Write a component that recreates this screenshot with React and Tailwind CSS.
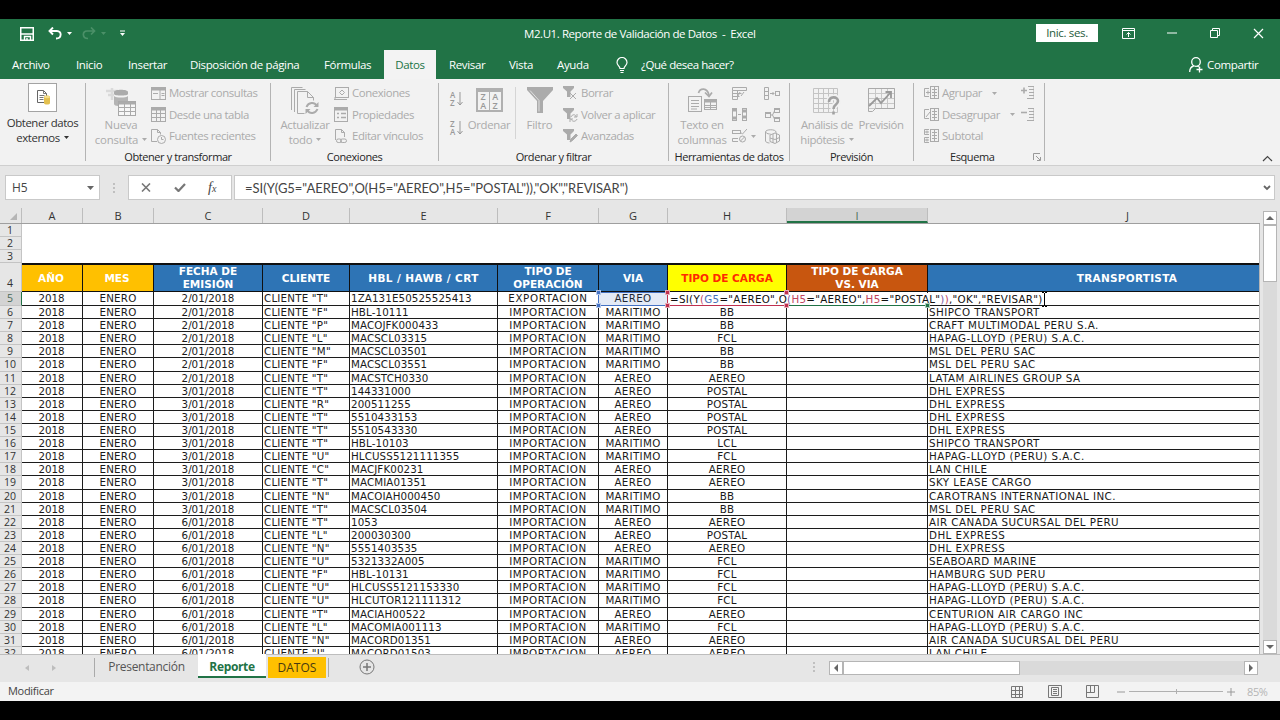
import React from "react";

const COLS = ["A", "B", "C", "D", "E", "F", "G", "H", "I", "J"];
const COL_W = [
  "w-[61px]", "w-[71px]", "w-[109px]", "w-[87px]", "w-[148px]",
  "w-[101px]", "w-[69px]", "w-[119px]", "w-[141px]", "w-[334px]",
];
const COL_TRACK = [
  "pr-[1px]", "tracking-[0.2px]", "", "tracking-[0.2px]", "tracking-[0.1px]",
  "tracking-[0.6px]", "tracking-[0.35px]", "tracking-[0.25px]", "", "tracking-[0.46px]",
];

const HEADERS = [
  ["AÑO"], ["MES"], ["FECHA DE", "EMISIÓN"], ["CLIENTE"], ["HBL / HAWB / CRT"],
  ["TIPO DE", "OPERACIÓN"], ["VIA"], ["TIPO DE CARGA"], ["TIPO DE CARGA", "VS. VIA"], ["TRANSPORTISTA"],
];
const HEADER_BG = [
  "bg-[#ffc000] text-white pr-[2px]", "bg-[#ffc000] text-white pr-[2px]", "bg-[#2e74b5] text-white", "bg-[#2e74b5] text-white",
  "bg-[#2e74b5] text-white tracking-[0.38px]", "bg-[#2e74b5] text-white", "bg-[#2e74b5] text-white", "bg-[#ffff00] text-[#ff2a00]",
  "bg-[#c8560f] text-white", "bg-[#2e74b5] text-white pl-[65px] tracking-[0.25px]",
];

const ROWS = [
  ["2/01/2018", "T", "1ZA131E50525525413", "EXPORTACION", "AEREO", "", ""],
  ["2/01/2018", "F", "HBL-10111", "IMPORTACION", "MARITIMO", "BB", "SHIPCO TRANSPORT"],
  ["2/01/2018", "P", "MACOJFK000433", "IMPORTACION", "MARITIMO", "BB", "CRAFT MULTIMODAL PERU S.A."],
  ["2/01/2018", "L", "MACSCL03315", "IMPORTACION", "MARITIMO", "FCL", "HAPAG-LLOYD (PERU) S.A.C."],
  ["2/01/2018", "M", "MACSCL03501", "IMPORTACION", "MARITIMO", "BB", "MSL DEL PERU SAC"],
  ["2/01/2018", "F", "MACSCL03551", "IMPORTACION", "MARITIMO", "BB", "MSL DEL PERU SAC"],
  ["2/01/2018", "T", "MACSTCH0330", "IMPORTACION", "AEREO", "AEREO", "LATAM AIRLINES GROUP SA"],
  ["3/01/2018", "T", "144331000", "IMPORTACION", "AEREO", "POSTAL", "DHL EXPRESS"],
  ["3/01/2018", "R", "200511255", "IMPORTACION", "AEREO", "POSTAL", "DHL EXPRESS"],
  ["3/01/2018", "T", "5510433153", "IMPORTACION", "AEREO", "POSTAL", "DHL EXPRESS"],
  ["3/01/2018", "T", "5510543330", "IMPORTACION", "AEREO", "POSTAL", "DHL EXPRESS"],
  ["3/01/2018", "T", "HBL-10103", "IMPORTACION", "MARITIMO", "LCL", "SHIPCO TRANSPORT"],
  ["3/01/2018", "U", "HLCUSS5121111355", "IMPORTACION", "MARITIMO", "FCL", "HAPAG-LLOYD (PERU) S.A.C."],
  ["3/01/2018", "C", "MACJFK00231", "IMPORTACION", "AEREO", "AEREO", "LAN CHILE"],
  ["3/01/2018", "T", "MACMIA01351", "IMPORTACION", "AEREO", "AEREO", "SKY LEASE CARGO"],
  ["3/01/2018", "N", "MACOIAH000450", "IMPORTACION", "MARITIMO", "BB", "CAROTRANS INTERNATIONAL INC."],
  ["3/01/2018", "T", "MACSCL03504", "IMPORTACION", "MARITIMO", "BB", "MSL DEL PERU SAC"],
  ["6/01/2018", "T", "1053", "IMPORTACION", "AEREO", "AEREO", "AIR CANADA SUCURSAL DEL PERU"],
  ["6/01/2018", "L", "200030300", "IMPORTACION", "AEREO", "POSTAL", "DHL EXPRESS"],
  ["6/01/2018", "N", "5551403535", "IMPORTACION", "AEREO", "AEREO", "DHL EXPRESS"],
  ["6/01/2018", "U", "5321332A005", "IMPORTACION", "MARITIMO", "FCL", "SEABOARD MARINE"],
  ["6/01/2018", "F", "HBL-10131", "IMPORTACION", "MARITIMO", "FCL", "HAMBURG SUD PERU"],
  ["6/01/2018", "U", "HLCUSS5121153330", "IMPORTACION", "MARITIMO", "FCL", "HAPAG-LLOYD (PERU) S.A.C."],
  ["6/01/2018", "U", "HLCUTOR121111312", "IMPORTACION", "MARITIMO", "FCL", "HAPAG-LLOYD (PERU) S.A.C."],
  ["6/01/2018", "T", "MACIAH00522", "IMPORTACION", "AEREO", "AEREO", "CENTURION AIR CARGO INC"],
  ["6/01/2018", "L", "MACOMIA001113", "IMPORTACION", "MARITIMO", "FCL", "HAPAG-LLOYD (PERU) S.A.C."],
  ["6/01/2018", "N", "MACORD01351", "IMPORTACION", "AEREO", "AEREO", "AIR CANADA SUCURSAL DEL PERU"],
  ["6/01/2018", "J", "MACORD01503", "IMPORTACION", "AEREO", "AEREO", "LAN CHILE"],
];

const TABS = [
  ["Archivo", "w-[64px]"], ["Inicio", "w-[52px]"], ["Insertar", "w-[62px]"],
  ["Disposición de página", "w-[134px]"], ["Fórmulas", "w-[60px]"],
];

function Svg({ w, h, children, className = "" }) {
  return (
    <svg width={w} height={h} viewBox={`0 0 ${w} ${h}`} fill="none" stroke="currentColor" className={"shrink-0 " + className}>
      {children}
    </svg>
  );
}

function Caret({ className = "" }) {
  return (
    <Svg w={5} h={3} className={className}>
      <path d="M0 0h5L2.5 3z" fill="currentColor" stroke="none" />
    </Svg>
  );
}

/* ---------- ribbon icons ---------- */

const IconDatabase = () => (
  <Svg w={29} h={29}>
    <rect x=".5" y=".5" width="28" height="28" fill="#fff" stroke="#a3a3a3" />
    <path d="M9.500 7.500h6l3 3v9h-9z" stroke="#666" fill="#fff" />
    <path d="M15.500 7.500v3h3M11.500 12.500h5M11.500 14.500h4M11.500 16.500h4" stroke="#777" />
    <path d="M16 14c0-2 6-2 6 0v6c0 2-6 2-6 0z" fill="#e3c04f" stroke="none" />
    <ellipse cx="19" cy="14" rx="3" ry="1.200" fill="#f4dd8a" stroke="none" />
  </Svg>
);
const IconNewQuery = () => (
  <Svg w={31} h={31}>
    <path d="M0 4h12M2 8h6M6 1v12" stroke="#dadada" strokeWidth="2.500" />
    <path d="M8 5c0-3 14-3 14 0v2c0 2-14 2-14 0z" fill="#ababab" stroke="none" />
    <path d="M8 9c2 2 12 2 14 0v5H12v5c-2 0-4-1-4-2z" fill="#b4b4b4" stroke="none" />
    <rect x="12.500" y="14.500" width="17" height="14" fill="#f7f7f7" stroke="#a8a8a8" />
    <path d="M12.500 16h17" strokeWidth="3" />
    <path d="M12.500 20.500h17M12.500 24.500h17M18.500 16v12M24.500 16v12" />
  </Svg>
);
const IconPane = () => (
  <Svg w={15} h={13}>
    <rect x=".5" y=".5" width="14" height="12" />
    <path d="M1 2h13" strokeWidth="3" />
    <path d="M9 3v9M10.500 6.500h3M10.500 8.500h3M2 6.500h5" />
  </Svg>
);
const IconTable = () => (
  <Svg w={15} h={15}>
    <rect x=".5" y=".5" width="14" height="14" />
    <path d="M1 2h13" strokeWidth="3" />
    <path d="M.5 6.500h14M.5 10.500h14M5.500 3v11M9.500 3v11" />
  </Svg>
);
const IconRecent = () => (
  <Svg w={15} h={15}>
    <path d="M6 12.500H.5V.5h6l3 3v2M6.500.5v3h3" />
    <circle cx="10.500" cy="10.500" r="4" />
    <path d="M10.500 8v2.500h2" />
  </Svg>
);
const IconRefreshAll = () => (
  <Svg w={28} h={28}>
    <path d="M.5 23V.5h11M3.500 25V2.500h11M6.500 26.500v-22h10l6 6v3M16.500 4.500v6h6M6.500 26.500h7" />
    <path d="M15.500 20c2-5 8-5 10-1.500M26.500 22c-2 5-8 5-10 1.500" strokeWidth="2" />
    <path d="M27.500 15v5h-5zM14.500 27v-5h5z" fill="currentColor" stroke="none" />
  </Svg>
);
const IconConn = () => (
  <Svg w={15} h={13}>
    <rect x="1.500" y=".5" width="13" height="10" />
    <path d="M5.500 5.500L8 3l2.500 2.500L8 8zM0 12.500h13M1 10v2" />
  </Svg>
);
const IconProps = () => (
  <Svg w={14} h={15}>
    <rect x=".5" y=".5" width="13" height="14" />
    <path d="M1 2h12" strokeWidth="3" />
    <path d="M3 6.500h2M7 6.500h5M3 10.500h2M7 10.500h5" strokeWidth="1.500" />
  </Svg>
);
const IconLinks = () => (
  <Svg w={14} h={15}>
    <path d="M1.500 11V.5h6l3 3V8M7.500.5v3h3" />
    <rect x="2.500" y="10" width="5" height="3.500" rx="1.700" />
    <rect x="6.500" y="10" width="6" height="3.500" rx="1.700" />
  </Svg>
);
const IconSort = ({ a, b }) => (
  <div className="flex h-[18px] w-[14px] items-center text-[#999]">
    <div className="flex w-[7px] flex-col text-[8px] leading-[8px] font-semibold">
      <span>{a}</span>
      <span>{b}</span>
    </div>
    <Svg w={6} h={14}>
      <path d="M3 0v13M.5 10L3 13l2.500-3" />
    </Svg>
  </div>
);
const IconSortBig = () => (
  <div className="flex h-[24px] w-[27px] border-2 border-t-4 border-[#b0b0b0] text-[9px] font-semibold leading-[9px] text-[#999]">
    <div className="flex flex-1 flex-col items-center border-r border-[#b0b0b0]"><span>Z</span><span>A</span></div>
    <div className="flex flex-1 flex-col items-center"><span>A</span><span>Z</span></div>
  </div>
);
const IconFunnel = () => (
  <Svg w={26} h={27}>
    <path d="M0 0h26v3L16 14v12h-6V14L0 3z" fill="#ababab" stroke="none" />
    <path d="M3 3.500L12 13.500v11" stroke="#e0e0e0" />
  </Svg>
);
const SmallFunnel = ({ children }) => (
  <Svg w={15} h={14}>
    <path d="M0 0h11v2L7.500 5.500V11H4V5.500L0 2z" fill="#ababab" stroke="none" />
    {children}
  </Svg>
);
const IconTextCols = () => (
  <Svg w={29} h={25}>
    <rect x=".5" y="9.500" width="13" height="15" />
    <path d="M3 13.500h8M3 16.500h8M3 19.500h8M3 22h6" />
    <rect x="16.500" y="12.500" width="12" height="10" />
    <path d="M16 14h13" strokeWidth="3" />
    <path d="M16.500 18.500h12M16.500 20.500h12M22.500 14v8" />
    <path d="M10.500 6C12 1 19 0 21 8" strokeWidth="1.700" />
    <path d="M17 5.500l4 4 3-4" strokeWidth="1.700" />
  </Svg>
);
const IconFlash = () => (
  <Svg w={15} h={13}>
    <path d="M.5.5h14v3H.5zM.5 3.500v9h5v-9M.5 6.500h9M.5 9.500h7M8 5l-2 4M12 5l-3 4" />
  </Svg>
);
const IconDup = () => (
  <Svg w={15} h={13}>
    <rect x=".5" y=".5" width="4" height="12" />
    <rect x="10.500" y=".5" width="4" height="12" />
    <path d="M1 2h3M1 10h3M11 3h3M11 9h3" strokeWidth="3" />
    <path d="M6 6.500h3" />
  </Svg>
);
const IconValid = () => (
  <Svg w={15} h={14}>
    <rect x=".5" y="1.500" width="8" height="3" />
    <path d="M6 12.500H.5v-3H6M8 3l2.500 2L15 0" />
    <circle cx="10.500" cy="10" r="3" />
    <path d="M8.500 12l4-4" />
  </Svg>
);
const IconConsolidate = () => (
  <Svg w={16} h={13}>
    <path d="M.5.5h4v12h-4zM.5 4.500h4M.5 8.500h4M6 6.500h4M8.500 5L10 6.500 8.500 8" />
    <rect x="11.500" y="4.500" width="4" height="4" />
  </Svg>
);
const IconRelations = () => (
  <Svg w={15} h={14}>
    <rect x=".5" y="4.500" width="5" height="5" />
    <rect x="9.500" y=".5" width="5" height="4" />
    <rect x="9.500" y="9.500" width="5" height="4" />
    <path d="M5.500 7h2l2-4M7.500 7l2 4M.5 5.500h5M9.500 1.500h5M9.500 10.500h5" />
  </Svg>
);
const IconModel = () => (
  <Svg w={15} h={15}>
    <path d="M.5 3C.5 0 11 0 11 3v1M.5 3v9c0 1 2 2 4 2M.5 3c1 2 4 2 5 2" />
    <path d="M5 6l5-2 4.500 2v6L10 14.500 5 12.500zM5 9l5 1.500 4.500-2M8 5v9M11.500 4.500V14" />
  </Svg>
);
const IconWhatIf = () => (
  <Svg w={28} h={28}>
    <path d="M.5.500h24v24H.5zM.5 5.500h24M.5 10.500h24M.5 15.500h24M.5 20.500h24M5.500.5v24M10.500.5v24M15.500.5v24M20.500.5v24" stroke="#c4c4c4" />
    <path d="M16 14c0-6 9-6 9-1 0 4-4.500 3-4.500 8" stroke="#f1f1f1" strokeWidth="6" />
    <path d="M16 14c0-6 9-6 9-1 0 4-4.500 3-4.500 8M20.500 23.500v3" stroke="#a2a2a2" strokeWidth="2.600" />
  </Svg>
);
const IconForecast = () => (
  <Svg w={27} h={25}>
    <path d="M.5.5h26v20H.5zM.5 5.500h26M.5 10.500h26M.5 15.500h26M7.500.5v20M13.500.5v20M19.500.5v20" stroke="#c8c8c8" />
    <path d="M.5.5h26v20M.5.5v23h4l3-3h19" stroke="#aaa" />
    <path d="M1 18l8-8 4 5L23 4M17.500 4H23v6" stroke="#999" strokeWidth="1.800" />
  </Svg>
);
const IconGroup = ({ minus, total }) => (
  <Svg w={15} h={14}>
    <rect x="6.500" y=".5" width="8" height="12" />
    <path d="M8 3.500h5M8 6.500h5M8 9.500h5M10.500 1v11" />
    {total ? (
      <path d="M5 .5H.5v5H5M5 8.500H.5v5H5M1 3h4M3 1.500v3M1 11h4M3 9.500v3" />
    ) : (
      <path d={minus ? "M5 1.500H.5v9H5M2 9l4-5" : "M5 2.500H.5v8H5M2 6.500h4M4 4.500v4"} />
    )}
  </Svg>
);
const IconDetail = ({ minus }) => (
  <Svg w={14} h={14}>
    <path d={minus ? "M0 4.500h6" : "M0 4.500h6M3 1.500v6"} strokeWidth="1.600" />
    <path d="M7 .5h6M8 3.500h5M8 6.500h5M8 9.500h5M6 12.500h7" />
    <path d="M12.500.5v12" strokeDasharray="1 1" />
  </Svg>
);

/* ---------- ribbon structure ---------- */

function Group({ width, label, children, labelClass = "justify-center" }) {
  return (
    <div className={"mt-1 flex h-[78px] shrink-0 flex-col border-r border-[#b4b4b4] " + width}>
      <div className="flex h-[66px] shrink-0 text-[#ababab]">{children}</div>
      <div className={"flex h-4 shrink-0 items-center whitespace-nowrap text-[11px] font-medium leading-[16px] tracking-[-0.42px] text-[#262626] " + labelClass}>
        {label}
      </div>
    </div>
  );
}

function Big({ className = "tracking-[-0.35px]", icon, lines, iconBox = "h-[34px] pt-1" }) {
  return (
    <div className={"flex shrink-0 flex-col items-center text-[11.400px] leading-[15px] " + className}>
      <div className={"flex items-start justify-center " + iconBox}>{icon}</div>
      {lines.map((l, i) => (
        <div key={i} className="flex items-center gap-1 whitespace-nowrap">{l}</div>
      ))}
    </div>
  );
}

function Items({ className = "", items }) {
  return (
    <div className={"-mt-[0.5px] flex flex-col tracking-[-0.42px] " + className}>
      {items.map(([icon, text, caret], i) => (
        <div key={i} className="flex h-[21.500px] items-center gap-[3px] whitespace-nowrap text-[11.400px] leading-[20px]">
          <div className="flex w-4 shrink-0 justify-center">{icon}</div>
          {text && <span>{text}</span>}
          {caret && <Caret className={text ? "ml-[7px]" : "ml-px"} />}
        </div>
      ))}
    </div>
  );
}

function Ribbon() {
  return (
    <div className="flex h-[87px] border-b border-[#cfcfcf] bg-[#f2f2f2]">
      <Group width="w-[86px]" label="">
        <Big
          className="w-full text-[#333] tracking-[-0.42px]"
          iconBox="h-[32px] pt-0"
          icon={<IconDatabase />}
          lines={["Obtener datos", <React.Fragment key="e">externos <Caret /></React.Fragment>]}
        />
      </Group>
      <Group width="w-[185px]" label="Obtener y transformar">
        <Big className="ml-[8px] w-[54px] tracking-[-0.2px]" icon={<IconNewQuery />} lines={["Nueva", <React.Fragment key="c">consulta <Caret /></React.Fragment>]} />
        <Items
          className="ml-[2px]"
          items={[[<IconPane />, "Mostrar consultas"], [<IconTable />, "Desde una tabla"], [<IconRecent />, "Fuentes recientes"]]}
        />
      </Group>
      <Group width="w-[168px]" label="Conexiones">
        <Big className="ml-[9px] w-[50px] tracking-[-0.3px]" icon={<IconRefreshAll />} lines={["Actualizar", <React.Fragment key="t">todo <Caret /></React.Fragment>]} />
        <Items
          className="ml-[3px]"
          items={[[<IconConn />, "Conexiones"], [<IconProps />, "Propiedades"], [<IconLinks />, "Editar vínculos"]]}
        />
      </Group>
      <Group width="w-[230px]" label="Ordenar y filtrar">
        <div className="ml-[11px] flex w-[16px] flex-col gap-[11px] pt-[7px]">
          <IconSort a="A" b="Z" />
          <IconSort a="Z" b="A" />
        </div>
        <Big className="ml-[2px] w-[42px] tracking-[-0.35px]" iconBox="h-[34px] pt-[5px]" icon={<IconSortBig />} lines={["Ordenar"]} />
        <div className="ml-[5px] mt-1 h-[52px] w-px bg-[#d5d5d5]" />
        <Big className="ml-[10px] w-[27px] tracking-[-0.2px]" icon={<IconFunnel />} lines={["Filtro"]} />
        <Items
          className="ml-[9px]"
          items={[
            [<SmallFunnel><path d="M7 7l6 6M13 7l-6 6" /></SmallFunnel>, "Borrar"],
            [<SmallFunnel><path d="M8 9c1-3 5-3 5 0M14 11c-1 3-5 3-6 0M14 6v3h-3M7 14v-3h3" /></SmallFunnel>, "Volver a aplicar"],
            [<SmallFunnel><path d="M7 13l1-3 5-5 1.500 1.500-5 5z" fill="currentColor" /></SmallFunnel>, "Avanzadas"],
          ]}
        />
      </Group>
      <Group width="w-[121px]" label="Herramientas de datos">
        <Big className="ml-[9px] w-[48px] tracking-[-0.3px]" icon={<IconTextCols />} lines={["Texto en", "columnas"]} />
        <Items className="ml-[5px]" items={[[<IconFlash />], [<IconDup />], [<IconValid />, "", true]]} />
        <Items className="ml-auto mr-[9px]" items={[[<IconConsolidate />], [<IconRelations />], [<IconModel />]]} />
      </Group>
      <Group width="w-[124px]" label="Previsión">
        <Big className="ml-[10px] w-[54px] tracking-[-0.4px]" iconBox="h-[34px] pt-[5px]" icon={<IconWhatIf />} lines={["Análisis de", <React.Fragment key="h">hipótesis <Caret /></React.Fragment>]} />
        <Big className="ml-[4px] w-[46px] tracking-[-0.4px]" iconBox="h-[34px] pt-[5px]" icon={<IconForecast />} lines={["Previsión"]} />
      </Group>
      <Group
        width="w-[131px]"
        labelClass="justify-between pl-[36px] pr-[3px]"
        label={
          <>
            <span>Esquema</span>
            <Svg w={8} h={8} className="text-[#999]"><path d="M.5 7V.5H7M3 3l4 4M7.500 4v3.500H4" /></Svg>
          </>
        }
      >
        <Items
          className="ml-[9px] w-[92px]"
          items={[[<IconGroup />, "Agrupar", true], [<IconGroup minus />, "Desagrupar", true], [<IconGroup total />, "Subtotal"]]}
        />
        <Items className="ml-[5px]" items={[[<IconDetail />], [<IconDetail minus />]]} />
      </Group>
      <div className="flex flex-1 items-end justify-end pb-[3px] pr-[7px] text-[#444]">
        <Svg w={11} h={7}><path d="M1 6l4.500-4.500L10 6" strokeWidth="1.200" /></Svg>
      </div>
    </div>
  );
}

/* ---------- title and tabs ---------- */

function TitleBar() {
  return (
    <div className="flex h-[31px] items-start text-white">
      <div className="flex h-[29px] w-[524px] items-center pl-5">
        <Svg w={14} h={14}>
          <rect x=".75" y=".75" width="12.500" height="12.500" strokeWidth="1.500" />
          <path d="M1 7h12M4.500 13V9.500h6V13M7 11v2" strokeWidth="1.400" />
        </Svg>
        <Svg w={14} h={13} className="ml-[14px]">
          <path d="M1 4h8c5 0 5 7.500-1 7.500M5 .5L1.500 4 5 7.500" strokeWidth="1.900" />
        </Svg>
        <Caret className="ml-[5px]" />
        <Svg w={14} h={13} className="ml-[10px] text-[#4b9068]">
          <path d="M13 4H5c-5 0-5 7.500 1 7.500M9 .5L12.500 4 9 7.500" strokeWidth="1.700" />
        </Svg>
        <Caret className="ml-[5px] text-[#4b9068]" />
        <Svg w={5} h={7} className="ml-[14px]">
          <path d="M0 1h5" />
          <path d="M0 3h5L2.500 6z" fill="currentColor" stroke="none" />
        </Svg>
      </div>
      <div className="h-[29px] w-[512px] whitespace-pre text-[11.500px] leading-[29px] tracking-[-0.43px]">M2.U1. Reporte de Validación de Datos  -  Excel</div>
      <div className="mt-[5px] flex h-[18px] w-[62px] items-center justify-center bg-white text-[11.500px] leading-none text-[#1f5b3c] tracking-[-0.35px]">Inic. ses.</div>
      <div className="flex h-[28px] flex-1 items-center pl-[24px]">
        <Svg w={13} h={11}><path d="M.5.5h12v10H.5zM.5 2.500h12M6.500 9V4.500M4.500 6.500l2-2 2 2" /></Svg>
        <Svg w={10} h={2} className="ml-[32px]"><path d="M0 1h10" /></Svg>
        <Svg w={10} h={10} className="ml-[33px]"><path d="M.5 2.500h7v7h-7zM2.500 2.500v-2h7v7h-2" /></Svg>
        <Svg w={11} h={11} className="ml-[33px]"><path d="M1 1l9 9M10 1l-9 9" strokeWidth="1.200" /></Svg>
      </div>
    </div>
  );
}

function TabBar() {
  return (
    <div className="flex h-[29px] whitespace-nowrap pl-3 text-[11.500px] leading-[30px] tracking-[-0.36px] text-white">
      {TABS.map(([t, w]) => (
        <div key={t} className={"shrink-0 " + w}>{t}</div>
      ))}
      <div className="w-[52px] shrink-0 bg-[#f3f3f3] text-center text-[#217346]">Datos</div>
      <div className="ml-[13px] w-[60px] shrink-0">Revisar</div>
      <div className="w-[48px] shrink-0">Vista</div>
      <div className="w-[59px] shrink-0">Ayuda</div>
      <Svg w={12} h={16} className="mt-[7px]">
        <path d="M4 11.500C4 9 1 8.500 1 5.500a5 5 0 0110 0c0 3-3 3.500-3 6zM4 13.500h4M4.500 15.500h3" strokeWidth="1.200" />
      </Svg>
      <div className="ml-[13px] w-[548px] shrink-0 tracking-[-0.45px]">¿Qué desea hacer?</div>
      <Svg w={14} h={16} className="mt-[7px]">
        <circle cx="7" cy="5" r="4.300" strokeWidth="1.300" />
        <path d="M.7 15c0-4 2-5.500 4-6M8 9c1.500.5 2.500 1 3 2M10.500 9.500v6M7.500 12.500h6" strokeWidth="1.300" />
      </Svg>
      <div className="ml-[4px]">Compartir</div>
    </div>
  );
}

function FormulaBar() {
  return (
    <div className="flex h-[42px] items-start pl-[5px] pt-[9px] text-[#444]">
      <div className="flex h-[25px] w-[95px] items-center justify-between border border-[#c9c9c9] bg-white pl-[6px] pr-[5px] text-[12px] leading-none">
        <span className="tracking-[-0.2px]">H5</span>
        <Svg w={7} h={4}><path d="M0 0h7L3.500 4z" fill="#666" stroke="none" /></Svg>
      </div>
      <div className="flex h-[25px] w-[28px] items-center justify-center">
        <Svg w={2} h={10}><path d="M1 0v10" stroke="#999" strokeDasharray="2 2" /></Svg>
      </div>
      <div className="flex h-[25px] w-[104px] items-center border border-[#c9c9c9] bg-white pl-[12px]">
        <Svg w={10} h={9}><path d="M1 .5l8 8M9 .5l-8 8" strokeWidth="1.600" stroke="#777" /></Svg>
        <Svg w={12} h={9} className="ml-[23px]"><path d="M1 4.500l3.500 3.500L11 1" strokeWidth="2.200" stroke="#777" /></Svg>
        <span className="ml-[22px] font-['Liberation_Serif',serif] text-[14px] italic leading-none">f<span className="text-[10px]">x</span></span>
      </div>
      <div className="ml-[2px] flex h-[25px] w-[1041px] items-center justify-between border border-[#c9c9c9] bg-white pl-[10px] pr-[3px]">
        <span className="whitespace-nowrap pt-px font-['Lato',sans-serif] text-[13px] leading-none tracking-[-0.035px]">
          =SI(Y(G5="AEREO",O(H5="AEREO",H5="POSTAL")),"OK","REVISAR")
        </span>
        <Svg w={8} h={6}><path d="M1 1l3 3 3-3" strokeWidth="1.800" stroke="#666" /></Svg>
      </div>
    </div>
  );
}

/* ---------- worksheet ---------- */

function ColumnHeads() {
  return (
    <div className="flex h-[16px] overflow-hidden border-b border-[#9f9f9f] text-[11px] leading-[16px] text-[#333]">
      <div className="flex w-[22px] shrink-0 items-end justify-end border-r border-[#bdbdbd] pb-[3px] pr-[4px]">
        <Svg w={7} h={7}><path d="M7 0v7H0z" fill="#b5b5b5" stroke="none" /></Svg>
      </div>
      {COLS.map((c, i) => (
        <div
          key={c}
          className={
            "h-[15px] shrink-0 text-center " + COL_W[i] + " " +
            (c === "I" ? "border-b-2 border-r border-b-[#217346] border-r-[#bdbdbd] bg-[#d3d3d3] text-[#4a6a58]" : i < 9 ? "border-r border-[#bdbdbd]" : "pl-[65px]")
          }
        >
          {c}
        </div>
      ))}
    </div>
  );
}

function RowNumber({ n, className = "", active }) {
  return (
    <div className={"flex w-[22px] shrink-0 justify-center border-r pr-[1px] text-[10.500px] leading-[13px] font-['Open_Sans',sans-serif] " + (active ? "border-b border-b-[#c4c4c4] border-r-[#217346] bg-[#d3d3d3] text-[#4a6a58] " : "border-b border-[#c4c4c4] bg-[#e6e6e6] text-[#333] ") + className}>
      {n}
    </div>
  );
}

function Cell({ i, left, children }) {
  return (
    <div className={"shrink-0 overflow-hidden whitespace-nowrap border-b border-r border-[#1c1c1c] bg-white " + COL_W[i] + " " + COL_TRACK[i] + " " + (left ? "pl-[1px] text-left" : "text-center")}>
      {children}
    </div>
  );
}

const Handle = ({ className }) => <div className={"absolute h-[5px] w-[5px] border border-white/60 " + className} />;

function EditorOverlay() {
  return (
    <>
      <div className="absolute left-[598px] top-[68px] h-[14px] w-[70px] border border-[#4472c4] bg-[#4472c4]/15" />
      <div className="absolute left-[667px] top-[69px] flex h-[12px] w-[378px] items-center whitespace-pre bg-white pl-[3px] text-[10.300px] leading-[12px] tracking-[0.29px] text-[#111]">
        <span>=SI(Y<span className="text-[#c0455f]">(</span><span className="text-[#4a72b8]">G5</span>="AEREO",O<span className="text-[#7a55a0]">(</span><span className="text-[#c0455f]">H5</span>="AEREO",<span className="text-[#c0455f]">H5</span>="POSTAL"<span className="text-[#7a55a0]">)</span><span className="text-[#c0455f]">)</span>,"OK","REVISAR")</span>
      </div>
      <div className="absolute left-[667px] top-[68px] h-[14px] w-[120px] border border-[#c0304f] border-t-transparent border-r-transparent" />
      <div className="absolute left-[788px] top-[81px] h-px w-[140px] bg-[#217346]" />
      <Handle className="left-[596px] top-[66px] bg-[#4472c4]" />
      <Handle className="left-[596px] top-[79px] bg-[#4472c4]" />
      <Handle className="left-[665px] top-[66px] bg-[#c0304f]" />
      <Handle className="left-[665px] top-[79px] bg-[#c0304f]" />
      <Handle className="left-[784px] top-[66px] bg-[#c0304f]" />
      <Handle className="left-[784px] top-[79px] bg-[#c0304f]" />
      <Handle className="left-[925px] top-[79px] bg-[#217346]" />
      <Svg w={7} h={15} className="absolute left-[1041px] top-[68px] text-black">
        <path d="M1 .5h2M4 .5h2M3.500 1v13M1 14.500h2M4 14.500h2" />
      </Svg>
    </>
  );
}

function Sheet() {
  return (
    <div className="relative h-[430px] w-[1260px] overflow-hidden border-r border-[#b5b5b5] bg-white">
      <div className="flex h-[39px]">
        <div className="flex flex-col">
          <RowNumber n={1} className="h-[13px]" />
          <RowNumber n={2} className="h-[13px]" />
          <RowNumber n={3} className="h-[13px]" />
        </div>
      </div>
      <div className="flex h-[29px]">
        <RowNumber n={4} className="items-end pb-[1px]" />
        {HEADERS.map((h, i) => (
          <div
            key={i}
            className={"flex shrink-0 flex-col items-center justify-center whitespace-nowrap border-b border-r border-t-2 border-[#101010] text-[10.500px] font-bold leading-[13px] " + COL_W[i] + " " + HEADER_BG[i]}
          >
            {h.map((l) => <span key={l}>{l}</span>)}
          </div>
        ))}
      </div>
      {ROWS.map((r, k) => (
        <div key={k} className={"flex text-[10.300px] leading-[13.500px] text-[#1a1a1a] " + (k === 0 ? "h-[14px]" : "h-[13.110px]")}>
          <RowNumber n={k + 5} active={k === 0} />
          <Cell i={0}>2018</Cell>
          <Cell i={1}>ENERO</Cell>
          <Cell i={2}>{r[0]}</Cell>
          <Cell i={3} left>CLIENTE "{r[1]}"</Cell>
          <Cell i={4} left>{r[2]}</Cell>
          <Cell i={5}>{r[3]}</Cell>
          <Cell i={6}>{r[4]}</Cell>
          <Cell i={7}>{r[5]}</Cell>
          <Cell i={8} />
          <Cell i={9} left>{r[6]}</Cell>
        </div>
      ))}
      <EditorOverlay />
    </div>
  );
}

function ScrollButton({ d, className = "" }) {
  return (
    <div className={"flex h-[14px] w-[14px] shrink-0 items-center justify-center border border-[#b5b5b5] bg-white " + className}>
      <Svg w={8} h={8}><path d={d} fill="#666" stroke="none" /></Svg>
    </div>
  );
}

function SheetTabs() {
  return (
    <div className="flex h-[28px] items-start border-t border-[#bdbdbd] bg-[#e6e6e6]">
      <div className="flex h-[25px] w-[94px] items-center gap-[23px] pl-[25px]">
        <Svg w={4} h={6}><path d="M4 0v6L0 3z" fill="#bdbdbd" stroke="none" /></Svg>
        <Svg w={4} h={6}><path d="M0 0v6l4-3z" fill="#bdbdbd" stroke="none" /></Svg>
      </div>
      <div className="mt-[3px] h-[19px] w-px bg-[#aaa]" />
      <div className="h-[23px] w-[103px] text-center text-[12px] leading-[24px] tracking-[-0.3px] text-[#555]">Presentanción</div>
      <div className="-mt-px h-[24px] w-[68px] border-b-2 border-[#217346] bg-white text-center text-[12px] font-bold leading-[26px] tracking-[-0.35px] text-[#217346]">Reporte</div>
      <div className="ml-[2px] mt-[2px] h-[21px] w-[58px] bg-[#ffc000] text-center text-[12px] leading-[21px] text-[#4a3a10]">DATOS</div>
      <div className="ml-[2px] mt-[3px] h-[19px] w-px bg-[#aaa]" />
      <Svg w={16} h={16} className="ml-[30px] mt-[4px] text-[#777]"><circle cx="8" cy="8" r="7" /><path d="M8 4v8M4 8h8" strokeWidth="1.500" /></Svg>
      <div className="flex-1" />
      <Svg w={2} h={10} className="mt-[7px]"><path d="M1 0v10" stroke="#999" strokeDasharray="2 2" /></Svg>
      <div className="ml-[14px] mr-[22px] mt-[6px] flex h-[14px] w-[429px] bg-[#dadada]">
        <ScrollButton d="M6 0v8L2 4z" />
        <div className="h-[14px] w-[177px] border border-[#b5b5b5] bg-white" />
        <div className="flex-1" />
        <ScrollButton d="M2 0v8l4-4z" />
      </div>
    </div>
  );
}

function StatusBar() {
  return (
    <div className="flex h-[19px] items-center bg-[#f3f3f3] text-[#777]">
      <div className="flex-1 pb-[2px] pl-2 text-[11px] leading-none tracking-[-0.3px] text-[#444]">Modificar</div>
      <Svg w={12} h={12}><path d="M.5.5h11v11H.5zM.5 4.500h11M.5 8.500h11M4.500.5v11M8.500.5v11" /></Svg>
      <Svg w={14} h={13} className="ml-[25px]"><path d="M.5.5h13v12H.5zM3.500 2.500h7v8h-7zM5 4.500h4M5 6.500h4M5 8.500h4" /></Svg>
      <Svg w={13} h={13} className="ml-[24px]"><path d="M.5.5h12v12H.5zM.5 7.500h8v-7M4.500.5v7" /></Svg>
      <Svg w={8} h={2} className="ml-[18px] text-[#999]"><path d="M0 1h8" /></Svg>
      <Svg w={94} h={7} className="ml-[4px] text-[#b0b0b0]"><path d="M0 3.500h94M47.500 1v5" /></Svg>
      <Svg w={8} h={8} className="ml-[4px] text-[#999]"><path d="M0 4h8M4 0v8" /></Svg>
      <div className="ml-[12px] mr-[13px] w-[20px] pb-px text-[11px] leading-none tracking-[-0.4px] text-[#b5b5b5]">85%</div>
    </div>
  );
}

export default function App() {
  return (
    <div className="flex h-[720px] w-[1280px] flex-col overflow-hidden bg-black py-[19px] font-['Open_Sans',sans-serif]">
      <div className="h-[60px] shrink-0 bg-[#217346]">
        <TitleBar />
        <TabBar />
      </div>
      <Ribbon />
      <div className="flex flex-col bg-[#e6e6e6]">
        <FormulaBar />
        <div className="flex">
          <div className="flex w-[1260px] flex-col">
            <ColumnHeads />
            <div className="font-['DejaVu_Sans',sans-serif]">
              <Sheet />
            </div>
          </div>
          <div className="ml-[3px] flex h-[446px] w-[14px] flex-col pt-[3px]">
            <ScrollButton d="M0 6h8L4 2z" />
            <div className="h-[57px] border border-[#b5b5b5] bg-white" />
            <div className="flex-1 bg-[#dadada]" />
            <ScrollButton d="M0 2h8L4 6z" />
          </div>
        </div>
      </div>
      <SheetTabs />
      <StatusBar />
    </div>
  );
}
